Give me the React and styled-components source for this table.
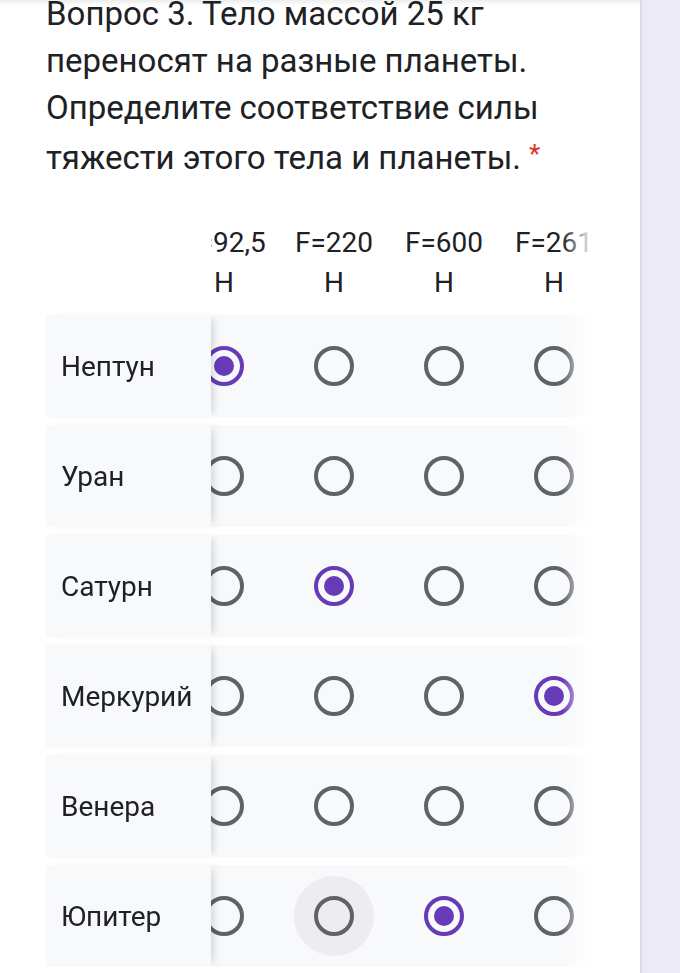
import React, { useLayoutEffect, useRef } from "react";
import styled, { createGlobalStyle } from "styled-components";

const GlobalStyle = createGlobalStyle`
  html, body {
    margin: 0;
    padding: 0;
    background: #edeaf8;
    overflow: hidden;
  }
  body {
    font-family: Roboto, "Liberation Sans", Arial, sans-serif;
    color: #202124;
  }
`;

const Page = styled.div`
  display: flex;
  height: 973px;
`;

const Card = styled.div`
  position: relative;
  width: 642px;
  flex-shrink: 0;
  background: #ffffff;
  border-right: 2px solid #dadce0;
  padding-left: 46px;
  box-sizing: border-box;
  overflow: hidden;

  &::before {
    content: "";
    position: absolute;
    top: 0;
    left: 0;
    right: 0;
    height: 6px;
    background: linear-gradient(rgba(0, 0, 0, 0.07), rgba(0, 0, 0, 0));
  }
`;

const Title = styled.div`
  margin-top: -10px;
  font-size: 33px;
  line-height: 47px;
  color: #202124;
  width: 560px;
`;

const Required = styled.span`
  color: #d93025;
  font-size: 26px;
  margin-left: 8px;
  vertical-align: 6px;
`;

const GridWrap = styled.div`
  position: relative;
  margin-top: 42px;
  width: 554px;
`;

const Scroller = styled.div`
  overflow-x: auto;
  scrollbar-width: none;
  &::-webkit-scrollbar {
    display: none;
  }
`;

const Table = styled.div`
  width: max-content;
  display: flex;
  flex-direction: column;
  gap: 8px;
`;

const Row = styled.div`
  display: grid;
  grid-template-columns: 165px repeat(4, 110px);
  align-items: center;
  height: ${(p) => (p.$head ? "auto" : "102px")};
  background: ${(p) => (p.$head ? "#ffffff" : "#f8f9fa")};
  padding-bottom: ${(p) => (p.$head ? "4px" : "0")};
`;

const LabelCell = styled.div`
  position: sticky;
  left: 0;
  z-index: 2;
  height: 100%;
  display: flex;
  align-items: center;
  padding-left: 15px;
  box-sizing: border-box;
  background: ${(p) => (p.$head ? "#ffffff" : "#f8f9fa")};
  font-size: 28px;
  color: #202124;
  box-shadow: ${(p) =>
    p.$head ? "none" : "6px 0 8px -4px rgba(0, 0, 0, 0.16)"};
`;

const HeadCell = styled.div`
  padding: 0 6px;
  text-align: center;
  font-size: 28px;
  line-height: 40px;
  color: #202124;
`;

const RadioCell = styled.div`
  display: flex;
  justify-content: center;
  align-items: center;
`;

const Ripple = styled.div`
  width: 80px;
  height: 80px;
  border-radius: 50%;
  display: flex;
  align-items: center;
  justify-content: center;
  background: ${(p) => (p.$hover ? "#ededf1" : "transparent")};
`;

const Radio = styled.div`
  width: 40px;
  height: 40px;
  box-sizing: border-box;
  border-radius: 50%;
  border: 4px solid ${(p) => (p.$checked ? "#673ab7" : "#5f6368")};
  display: flex;
  align-items: center;
  justify-content: center;

  &::after {
    content: "";
    width: 20px;
    height: 20px;
    border-radius: 50%;
    background: #673ab7;
    display: ${(p) => (p.$checked ? "block" : "none")};
  }
`;

const Fade = styled.div`
  position: absolute;
  top: 0;
  right: 0;
  bottom: 0;
  width: 38px;
  z-index: 3;
  pointer-events: none;
  background: linear-gradient(
    to right,
    rgba(255, 255, 255, 0),
    rgba(255, 255, 255, 0.85) 70%,
    #ffffff
  );
`;

const columns = ["F=92,5 Н", "F=220 Н", "F=600 Н", "F=261 Н"];

const planets = [
  { name: "Нептун", pick: 0 },
  { name: "Уран", pick: -1 },
  { name: "Сатурн", pick: 1 },
  { name: "Меркурий", pick: 3 },
  { name: "Венера", pick: -1 },
  { name: "Юпитер", pick: 2, hover: 1 },
];

export default function App() {
  const scrollRef = useRef(null);

  useLayoutEffect(() => {
    if (scrollRef.current) scrollRef.current.scrollLeft = 42;
  }, []);

  return (
    <Page>
      <GlobalStyle />
      <Card>
        <Title>
          Вопрос 3. Тело массой 25 кг переносят на разные планеты.
          Определите соответствие силы тяжести этого тела и планеты.
          <Required>*</Required>
        </Title>
        <GridWrap>
          <Scroller ref={scrollRef}>
            <Table>
              <Row $head>
                <LabelCell $head />
                {columns.map((col) => (
                  <HeadCell key={col}>{col}</HeadCell>
                ))}
              </Row>
              {planets.map((planet) => (
                <Row key={planet.name}>
                  <LabelCell>{planet.name}</LabelCell>
                  {columns.map((col, i) => (
                    <RadioCell key={col}>
                      <Ripple $hover={planet.hover === i}>
                        <Radio $checked={planet.pick === i} />
                      </Ripple>
                    </RadioCell>
                  ))}
                </Row>
              ))}
            </Table>
          </Scroller>
          <Fade />
        </GridWrap>
      </Card>
    </Page>
  );
}
